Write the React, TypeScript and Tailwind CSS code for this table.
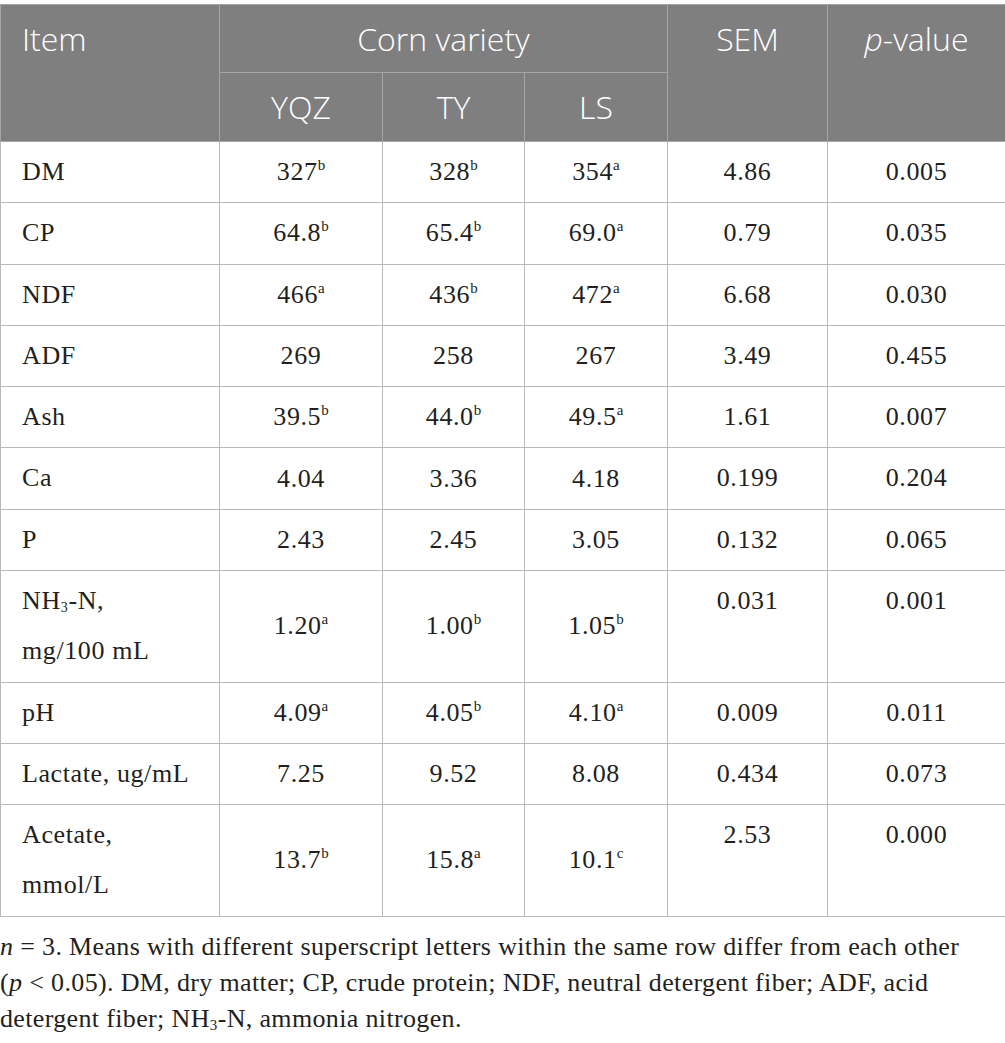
const rows: {
  item: React.ReactNode;
  vals: [string, string?][];
  sem: string;
  p: string;
  tall?: boolean;
}[] = [
  { item: "DM", vals: [["327", "b"], ["328", "b"], ["354", "a"]], sem: "4.86", p: "0.005" },
  { item: "CP", vals: [["64.8", "b"], ["65.4", "b"], ["69.0", "a"]], sem: "0.79", p: "0.035" },
  { item: "NDF", vals: [["466", "a"], ["436", "b"], ["472", "a"]], sem: "6.68", p: "0.030" },
  { item: "ADF", vals: [["269"], ["258"], ["267"]], sem: "3.49", p: "0.455" },
  { item: "Ash", vals: [["39.5", "b"], ["44.0", "b"], ["49.5", "a"]], sem: "1.61", p: "0.007" },
  { item: "Ca", vals: [["4.04"], ["3.36"], ["4.18"]], sem: "0.199", p: "0.204" },
  { item: "P", vals: [["2.43"], ["2.45"], ["3.05"]], sem: "0.132", p: "0.065" },
  {
    item: (
      <>
        NH<sub className="text-[14px] align-baseline relative top-[3px]">3</sub>-N,
        <br />
        mg/100 mL
      </>
    ),
    vals: [["1.20", "a"], ["1.00", "b"], ["1.05", "b"]],
    sem: "0.031",
    p: "0.001",
    tall: true,
  },
  { item: "pH", vals: [["4.09", "a"], ["4.05", "b"], ["4.10", "a"]], sem: "0.009", p: "0.011" },
  { item: "Lactate, ug/mL", vals: [["7.25"], ["9.52"], ["8.08"]], sem: "0.434", p: "0.073" },
  {
    item: (
      <>
        Acetate,
        <br />
        mmol/L
      </>
    ),
    vals: [["13.7", "b"], ["15.8", "a"], ["10.1", "c"]],
    sem: "2.53",
    p: "0.000",
    tall: true,
  },
];

function Val({ v }: { v: [string, string?] }) {
  return (
    <>
      {v[0]}
      {v[1] && (
        <sup className="text-[15px] tracking-normal align-baseline relative top-[-10px]">{v[1]}</sup>
      )}
    </>
  );
}

export default function App() {
  const head = "border border-[#a6a6a6] text-white font-light text-[32px] leading-[40px]";
  const cell = "border-[1.5px] border-[#b8b8b8] px-[21px] leading-[50px]";
  const topCell = `${cell} pt-[5px] pb-0 align-top`;

  return (
    <div
      className="bg-white pt-[4px] text-[#231f20] text-[26px] tracking-[0.6px]"
      style={{ fontFamily: '"Liberation Serif", "Times New Roman", serif' }}
    >
      <table className="w-[1005px] border-collapse table-fixed">
        <colgroup>
          <col className="w-[219px]" />
          <col className="w-[163px]" />
          <col className="w-[142px]" />
          <col className="w-[143px]" />
          <col className="w-[160px]" />
          <col className="w-[178px]" />
        </colgroup>
        <thead
          className="bg-[#7f7f7f] tracking-normal"
          style={{ fontFamily: '"Open Sans", Lato, sans-serif' }}
        >
          <tr className="h-[68px]">
            <th rowSpan={2} className={`${head} text-left align-top px-[21px] pt-[14px]`}>
              Item
            </th>
            <th colSpan={3} className={`${head} text-center`}>
              Corn variety
            </th>
            <th rowSpan={2} className={`${head} text-center align-top pt-[14px]`}>
              SEM
            </th>
            <th rowSpan={2} className={`${head} text-center align-top pt-[14px]`}>
              <i>p</i>-value
            </th>
          </tr>
          <tr className="h-[69px]">
            <th className={`${head} text-center`}>YQZ</th>
            <th className={`${head} text-center`}>TY</th>
            <th className={`${head} text-center`}>LS</th>
          </tr>
        </thead>
        <tbody>
          {rows.map((r, i) => (
            <tr key={i} className={r.tall ? "h-[111.5px]" : "h-[61.3px]"}>
              <td className={`${topCell} text-left whitespace-nowrap`}>{r.item}</td>
              {r.vals.map((v, j) => (
                <td key={j} className={`${cell} py-0 text-center align-middle`}>
                  <Val v={v} />
                </td>
              ))}
              <td className={`${topCell} text-center`}>{r.sem}</td>
              <td className={`${topCell} text-center`}>{r.p}</td>
            </tr>
          ))}
        </tbody>
      </table>
      <p className="mt-[12px] leading-[36px] whitespace-nowrap tracking-[0.35px]">
        <i>n</i> = 3. Means with different superscript letters within the same row differ from
        each other
        <br />
        (<i>p</i> &lt; 0.05). DM, dry matter; CP, crude protein; NDF, neutral detergent fiber; ADF,
        acid
        <br />
        detergent fiber; NH
        <sub className="text-[15px] align-baseline relative top-[3px]">3</sub>-N, ammonia
        nitrogen.
      </p>
    </div>
  );
}
